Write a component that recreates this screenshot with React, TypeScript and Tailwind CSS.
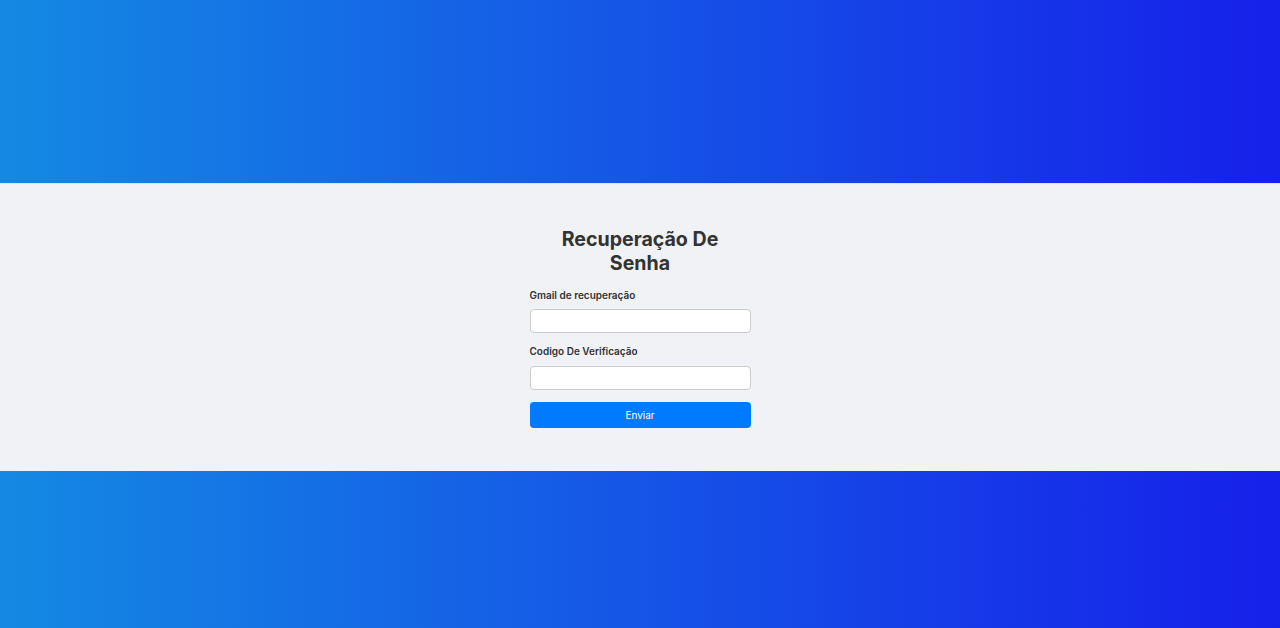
import React from "react";

export default function App() {
  return (
    <div
      className="w-[1280px] h-[628px] flex flex-col bg-[linear-gradient(to_right,#1489e3,#1620ea)]"
      style={{ fontFamily: "Inter, 'Noto Sans', sans-serif" }}
    >
      <div className="h-[183px] shrink-0" />
      <div className="h-[288px] shrink-0 bg-[#f0f2f5] flex items-center justify-center border-t border-[#d6e6f6]">
        <div className="w-[221px] flex flex-col">
          <h1 className="text-[19.6px] leading-[24px] font-bold text-[#333333] text-center w-[170px] mx-auto">
            Recuperação De Senha
          </h1>
          <label className="mt-[13px] text-[10px] leading-[15px] font-semibold text-[#333333]">
            Gmail de recuperação
          </label>
          <input
            className="mt-[6px] h-[24px] w-full bg-white border border-[#cccccc] rounded-[4px] outline-none"
            type="email"
          />
          <label className="mt-[11px] text-[10px] leading-[15px] font-semibold text-[#333333]">
            Codigo De Verificação
          </label>
          <input
            className="mt-[7px] h-[24px] w-full bg-white border border-[#cccccc] rounded-[4px] outline-none"
            type="text"
          />
          <button className="mt-[12px] h-[26px] w-full bg-[#007bff] text-white text-[10px] rounded-[4px]">
            Enviar
          </button>
        </div>
      </div>
      <div className="flex-1" />
    </div>
  );
}
